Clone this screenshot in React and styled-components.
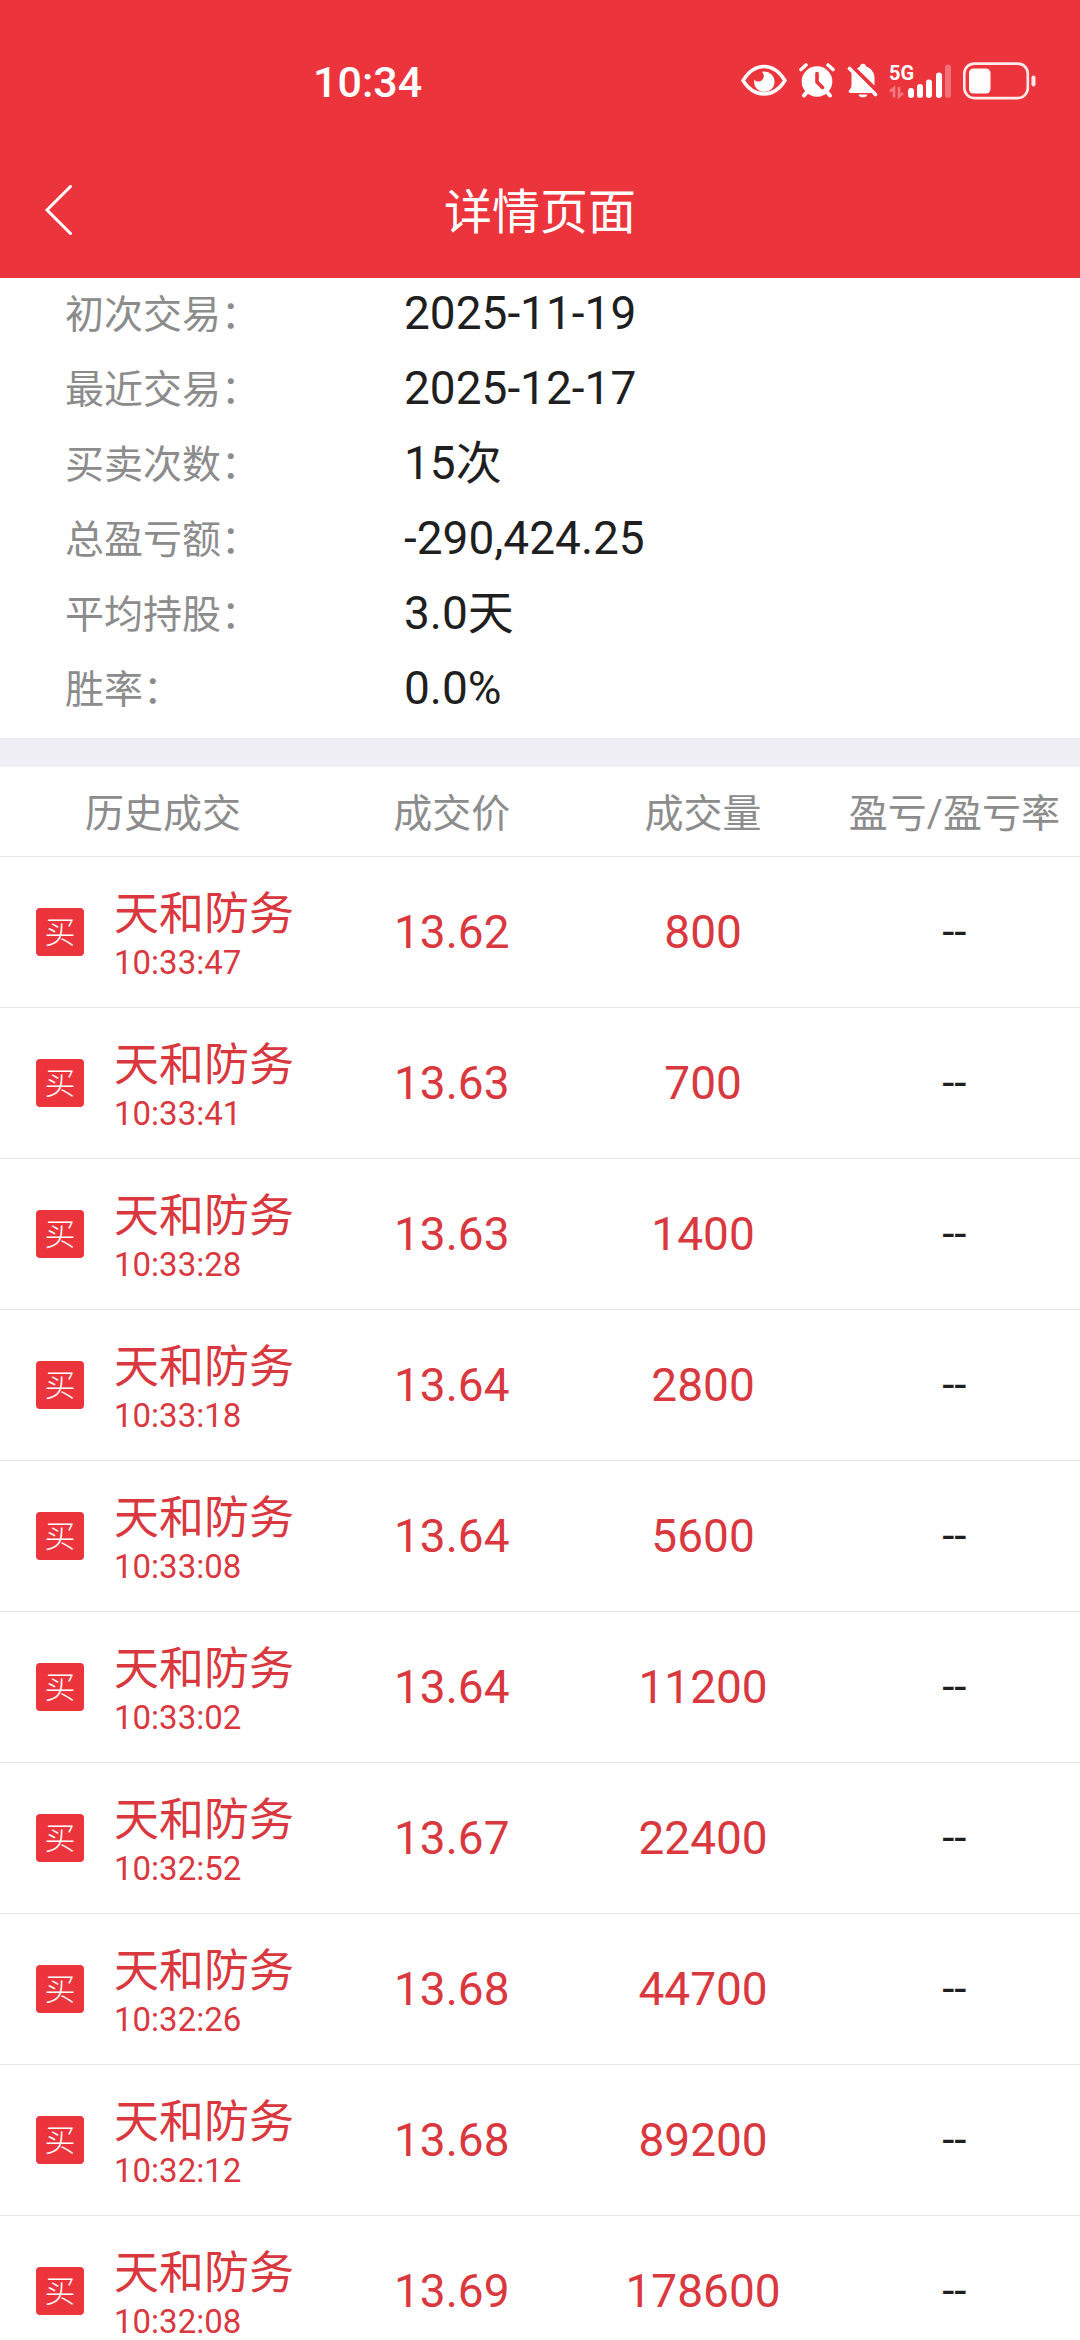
import React from 'react';
import styled, { createGlobalStyle } from 'styled-components';

const GlobalStyle = createGlobalStyle`
  :root {
    --red: #ec343c;
    --deal-red: #d9383f;
    --ink: #1f1f1f;
    --gray: #8c8c8c;
    --line: #e6e6e6;
    --band: #efeef4;
  }
  * {
    box-sizing: border-box;
    margin: 0;
    padding: 0;
  }
  body {
    background-color: #fff;
    color: var(--ink);
    font-family: Roboto, 'Noto Sans CJK SC', sans-serif;
  }
`;

const PageStyles = styled.div`
  display: flex;
  flex-direction: column;
  height: 100vh;
`;

const HeaderStyles = styled.header`
  flex: none;
  background-color: var(--red);
  color: #fff;
`;

const StatusBarStyles = styled.div`
  display: flex;
  align-items: center;
  justify-content: space-between;
  height: 144px;
  padding: 16px 44px 0 313px;
  .clock {
    padding-top: 4px;
    font-size: 43px;
    font-weight: 500;
    line-height: 48px;
  }
  .status-icons {
    display: flex;
    align-items: center;
  }
  svg {
    display: block;
  }
`;

const NavBarStyles = styled.div`
  display: grid;
  grid-template-columns: 120px 1fr 120px;
  align-items: center;
  height: 134px;
  h1 {
    padding-top: 3px;
    font-size: 48px;
    font-weight: 400;
    line-height: 64px;
    text-align: center;
  }
`;

const BackButton = styled.button`
  display: flex;
  align-items: center;
  height: 100px;
  padding-left: 44px;
  border: none;
  background: none;
  color: inherit;
`;

const MainStyles = styled.main`
  flex: 1;
  min-height: 0;
  overflow-y: auto;
  scrollbar-width: none;
`;

const SummaryStyles = styled.dl`
  padding: 0 65px 10px;
  border-bottom: 29px solid var(--band);
`;

const SummaryRow = styled.div`
  display: flex;
  align-items: flex-start;
  height: 75px;
  dt {
    flex: 0 0 339px;
    color: var(--gray);
    font-size: 39px;
    line-height: 75px;
  }
  dd {
    font-size: 46px;
    line-height: 70px;
  }
`;

const DealTable = styled.table`
  width: 100%;
  table-layout: fixed;
  border-collapse: separate;
  border-spacing: 0;
  .col-name {
    width: 30.2%;
  }
`;

const HeadCell = styled.th`
  height: 90px;
  padding-top: 4px;
  border-bottom: 1px solid var(--line);
  color: var(--gray);
  font-size: 39px;
  font-weight: 400;
  line-height: 56px;
  text-align: center;
  white-space: nowrap;
`;

const Cell = styled.td`
  height: 151px;
  border-bottom: 1px solid var(--line);
  color: ${({ $plain }) => ($plain ? 'var(--ink)' : 'var(--deal-red)')};
  font-size: ${({ $plain }) => ($plain ? '44px' : '46px')};
  text-align: center;
`;

const StockStyles = styled.div`
  display: flex;
  align-items: center;
  gap: 30px;
  padding-left: 36px;
  text-align: left;
  white-space: nowrap;
  .stock-text {
    padding-top: 4px;
  }
  .stock-name {
    font-size: 45px;
    line-height: 58px;
  }
  .stock-time {
    display: block;
    font-size: 33px;
    line-height: 38px;
  }
`;

const SideBadge = styled.span`
  flex: none;
  width: 48px;
  height: 48px;
  border-radius: 4px;
  background-color: var(--red);
  color: #fff;
  font-size: 31px;
  font-weight: 300;
  line-height: 50px;
  text-align: center;
`;

const summary = [
  ['初次交易：', '2025-11-19'],
  ['最近交易：', '2025-12-17'],
  ['买卖次数：', '15次'],
  ['总盈亏额：', '-290,424.25'],
  ['平均持股：', '3.0天'],
  ['胜率：', '0.0%'],
];

const deals = [
  { time: '10:33:47', price: '13.62', volume: 800 },
  { time: '10:33:41', price: '13.63', volume: 700 },
  { time: '10:33:28', price: '13.63', volume: 1400 },
  { time: '10:33:18', price: '13.64', volume: 2800 },
  { time: '10:33:08', price: '13.64', volume: 5600 },
  { time: '10:33:02', price: '13.64', volume: 11200 },
  { time: '10:32:52', price: '13.67', volume: 22400 },
  { time: '10:32:26', price: '13.68', volume: 44700 },
  { time: '10:32:12', price: '13.68', volume: 89200 },
  { time: '10:32:08', price: '13.69', volume: 178600 },
];

// All status icons share a 40px tall box so that they line up
function EyeIcon() {
  return (
    <svg width="58" height="40" viewBox="0 0 58 40" fill="none">
      <path
        d="M2 20.500C8 11 16 6.500 23 6.500S38 11 44 20.500C38 30 30 34 23 34S8 30 2 20.500Z"
        stroke="#fff"
        strokeWidth="3.400"
        strokeLinejoin="round"
      />
      <circle cx="23.300" cy="21.700" r="10.300" fill="#fff" />
      <circle cx="17.300" cy="16" r="5.500" fill="#ec343c" />
    </svg>
  );
}

function AlarmIcon() {
  return (
    <svg width="48" height="40" viewBox="0 0 48 40" fill="none" stroke="#fff" strokeLinecap="round">
      <path d="M2 9.500L7 5M34 9.500L29 5" strokeWidth="3.600" />
      <path d="M8 32L5 35.500M28 32L31 35.500" strokeWidth="4" />
      <circle cx="18" cy="21.500" r="15.300" fill="#fff" stroke="none" />
      <path d="M18 13.500V22L23.500 27.500" stroke="#ec343c" strokeWidth="3.600" />
    </svg>
  );
}

function BellOffIcon() {
  return (
    <svg width="42" height="40" viewBox="0 0 42 40" fill="none">
      <path d="M4.500 12.500L25 33H3.500C1.500 33 1 31 2.500 29.800C4 28.500 4.500 27 4.500 24Z" fill="#fff" />
      <path d="M10 8.500L13 6.500C13 2.800 19 2.800 19 6.500C24.500 8.500 27.500 12.500 27.500 18V25.500Z" fill="#fff" />
      <path d="M11.500 34.500H20.500C19.500 38.300 12.500 38.300 11.500 34.500Z" fill="#fff" />
      <path d="M2.500 8.500L28.500 34.500" stroke="#fff" strokeWidth="3.600" strokeLinecap="round" />
    </svg>
  );
}

function SignalIcon() {
  return (
    <svg width="74" height="40" viewBox="0 0 74 40">
      <text x="0" y="20" fontSize="20" fontWeight="700" fill="#fff">5G</text>
      <g fill="none" stroke="#fff" strokeOpacity="0.350" strokeWidth="2.600">
        <path d="M1 31.500L5 28V37.500" />
        <path d="M10 27V36.500L14 33" />
      </g>
      <g fill="#fff">
        <rect x="19" y="28" width="6" height="10" rx="3" />
        <rect x="28" y="24" width="6" height="14" rx="3" />
        <rect x="37" y="19.500" width="6" height="18.500" rx="3" />
        <rect x="47" y="12.500" width="6" height="25.500" rx="3" />
        <rect x="56" y="4.500" width="6" height="33.500" rx="3" fillOpacity="0.300" />
      </g>
    </svg>
  );
}

function BatteryIcon() {
  return (
    <svg width="73" height="40" viewBox="0 0 73 40">
      <rect x="1.300" y="3.600" width="63.500" height="34.500" rx="10" fill="none" stroke="#fff" strokeOpacity="0.900" strokeWidth="2.600" />
      <rect x="6" y="8.500" width="21.500" height="25" rx="4.500" fill="#fff" />
      <rect x="68.500" y="15.500" width="4" height="11" rx="2" fill="#fff" fillOpacity="0.900" />
    </svg>
  );
}

function StatusBar() {
  return (
    <StatusBarStyles>
      <span className="clock">10:34</span>
      <div className="status-icons">
        <EyeIcon />
        <AlarmIcon />
        <BellOffIcon />
        <SignalIcon />
        <BatteryIcon />
      </div>
    </StatusBarStyles>
  );
}

function NavBar() {
  return (
    <NavBarStyles>
      <BackButton type="button" aria-label="返回">
        <svg width="28" height="52" viewBox="0 0 28 52" fill="none" stroke="currentColor" strokeWidth="3" strokeLinecap="round">
          <path d="M26.500 1.500L3 25L26.500 48.500" />
        </svg>
      </BackButton>
      <h1>详情页面</h1>
    </NavBarStyles>
  );
}

function Summary() {
  return (
    <SummaryStyles>
      {summary.map(([label, value]) => (
        <SummaryRow key={label}>
          <dt>{label}</dt>
          <dd>{value}</dd>
        </SummaryRow>
      ))}
    </SummaryStyles>
  );
}

function DealRow({ name = '天和防务', side = '买', time, price, volume, profit = '--' }) {
  return (
    <tr>
      <Cell>
        <StockStyles>
          <SideBadge>{side}</SideBadge>
          <div className="stock-text">
            <p className="stock-name">{name}</p>
            <time className="stock-time">{time}</time>
          </div>
        </StockStyles>
      </Cell>
      <Cell>{price}</Cell>
      <Cell>{volume}</Cell>
      <Cell $plain>{profit}</Cell>
    </tr>
  );
}

function App() {
  return (
    <PageStyles>
      <GlobalStyle />
      <HeaderStyles>
        <StatusBar />
        <NavBar />
      </HeaderStyles>
      <MainStyles>
        <Summary />
        <DealTable>
          <thead>
            <tr>
              <HeadCell className="col-name">历史成交</HeadCell>
              <HeadCell>成交价</HeadCell>
              <HeadCell>成交量</HeadCell>
              <HeadCell>盈亏/盈亏率</HeadCell>
            </tr>
          </thead>
          <tbody>
            {deals.map((deal) => (
              <DealRow key={deal.time} {...deal} />
            ))}
          </tbody>
        </DealTable>
      </MainStyles>
    </PageStyles>
  );
}

export default App;
